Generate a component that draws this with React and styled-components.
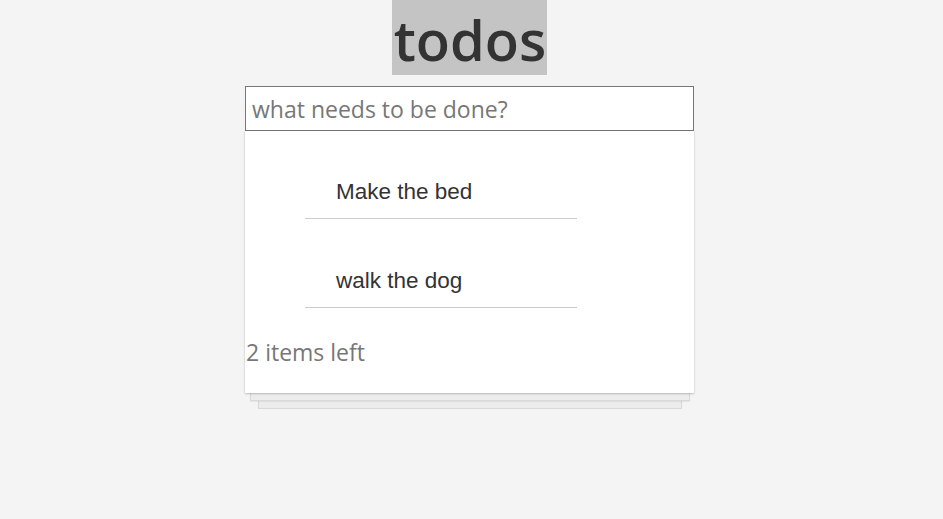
import React from 'react'
import styled, { createGlobalStyle } from 'styled-components'

const GlobalStyle = createGlobalStyle`
  html, body {
    margin: 0;
    padding: 0;
    background: #f4f4f4;
  }
`

const Page = styled.div`
  display: flex;
  flex-direction: column;
  align-items: center;
  padding-right: 4px;
`

const Title = styled.h1`
  box-sizing: border-box;
  margin: 0;
  padding: 4px 1px 0 2px;
  height: 75px;
  line-height: 71px;
  background: #c4c4c4;
  color: #333;
  font-family: 'Open Sans', 'Noto Sans', sans-serif;
  font-weight: 600;
  font-size: 56px;
`

const Board = styled.div`
  margin-top: 11px;
  width: 449px;
  display: flex;
  flex-direction: column;
  align-items: center;
`

const NewTodo = styled.input`
  display: block;
  box-sizing: border-box;
  width: 449px;
  height: 45px;
  margin: 0;
  padding: 0 6px;
  border: 1px solid #767676;
  background: #fff;
  font-family: 'Open Sans', 'Noto Sans', sans-serif;
  font-size: 23px;
  color: #333;
  outline: none;

  &::placeholder {
    color: #777;
  }
`

const Card = styled.div`
  position: relative;
  z-index: 2;
  box-sizing: border-box;
  width: 449px;
  height: 262px;
  background: #fff;
  box-shadow: 0 1px 2px rgba(0, 0, 0, 0.2), 0 0 1px rgba(0, 0, 0, 0.15);
`

const Sheet = styled.div`
  position: relative;
  z-index: ${p => p.$layer};
  box-sizing: border-box;
  width: ${p => p.$width}px;
  height: 8px;
  background: #ececec;
  border: 1px solid #d9d9d9;
  border-top: none;
  box-shadow: 0 1px 1px rgba(0, 0, 0, 0.06);
`

const List = styled.ul`
  list-style: none;
  margin: 0;
  padding: 0 0 0 60px;
`

const Item = styled.li`
  width: 272px;
  height: 88px;
  box-sizing: border-box;
  padding: 48px 0 0 31px;
  border-bottom: 1px solid #ccc;
  font-family: 'Liberation Sans', Arial, sans-serif;
  font-size: 22.5px;
  line-height: 26px;
  color: #333;

  & + & {
    height: 89px;
    padding-top: 49px;
  }
`

const Footer = styled.div`
  padding: 28px 0 0 1px;
  font-family: 'Open Sans', 'Noto Sans', sans-serif;
  font-size: 23px;
  color: #777;
`

const todos = ['Make the bed', 'walk the dog']

export default function App() {
  return (
    <Page>
      <GlobalStyle />
      <Title>todos</Title>
      <Board>
        <NewTodo placeholder="what needs to be done?" />
        <Card>
          <List>
            {todos.map(t => (
              <Item key={t}>{t}</Item>
            ))}
          </List>
          <Footer>{todos.length} items left</Footer>
        </Card>
        <Sheet $width={440} $layer={1} />
        <Sheet $width={424} $layer={0} />
      </Board>
    </Page>
  )
}
